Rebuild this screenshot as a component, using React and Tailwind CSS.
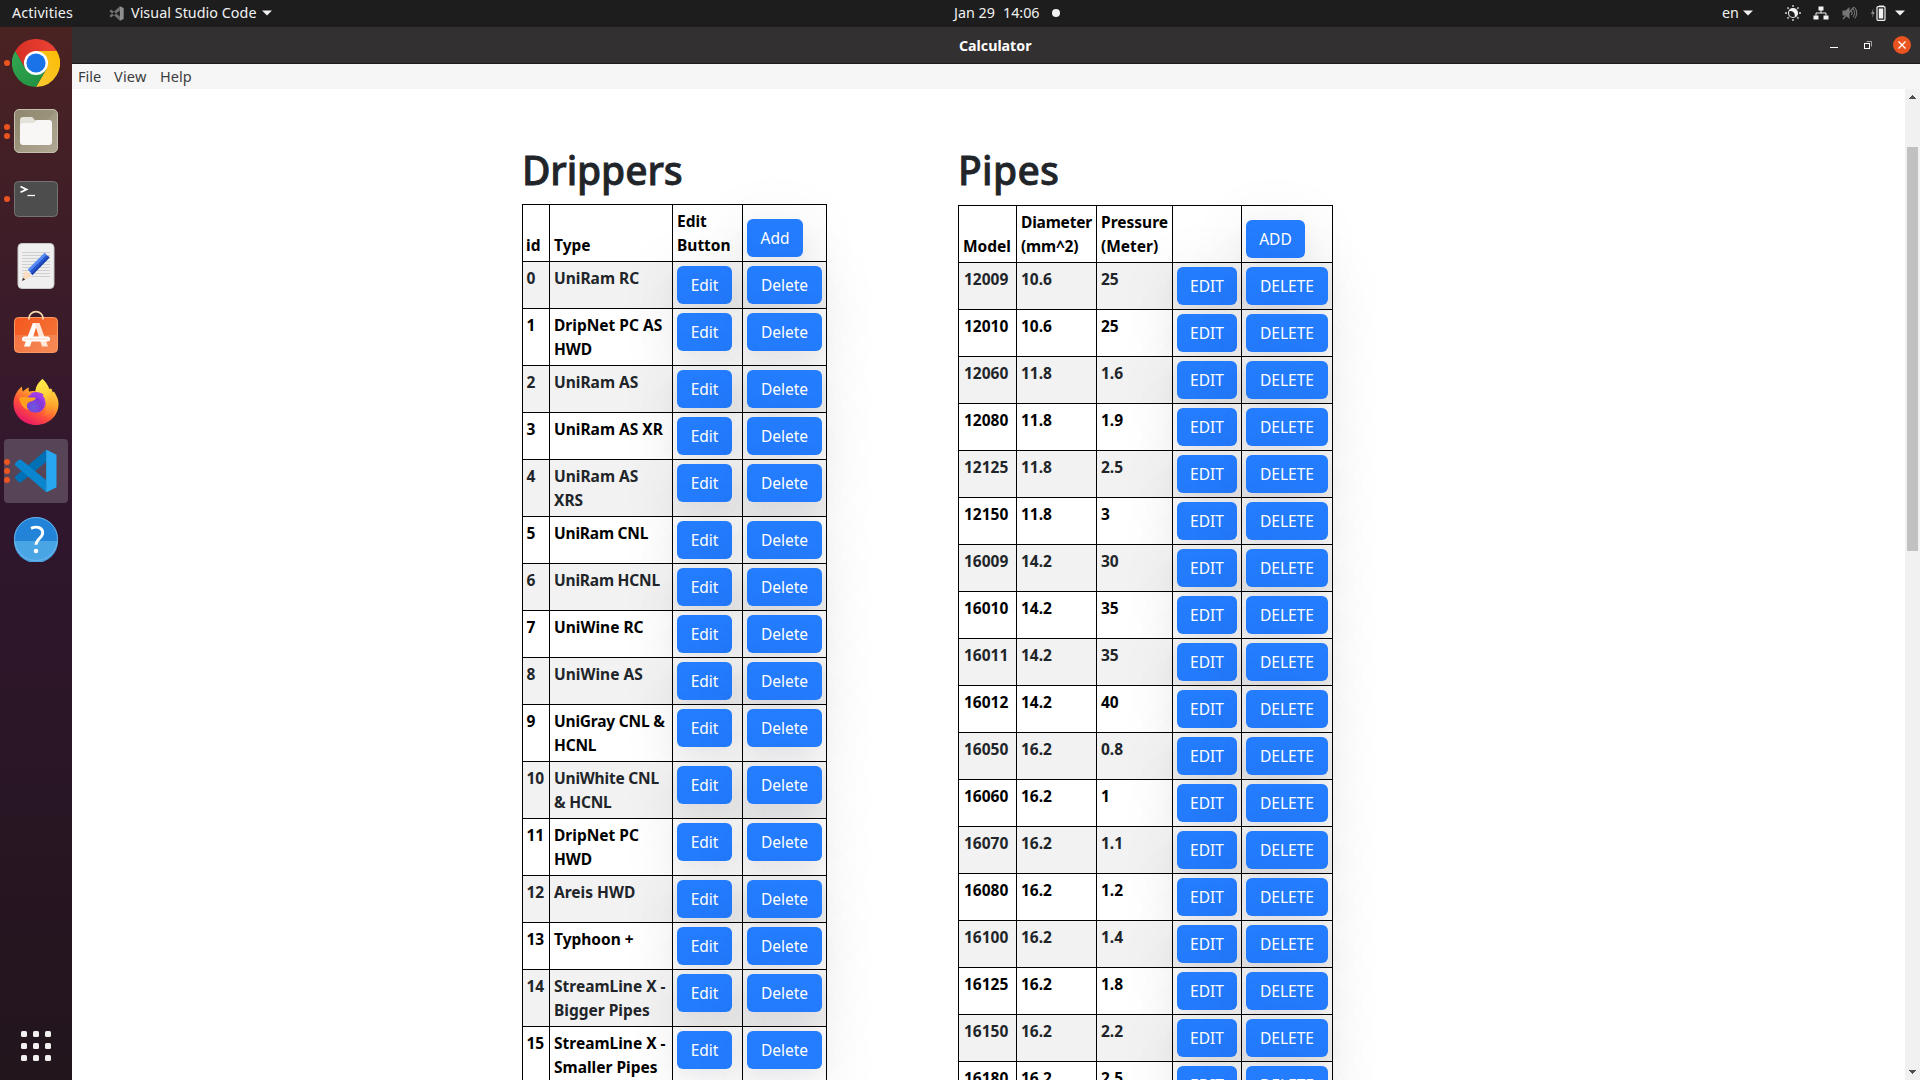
import React from "react";

const drippers = [
  "UniRam RC",
  "DripNet PC AS HWD",
  "UniRam AS",
  "UniRam AS XR",
  "UniRam AS XRS",
  "UniRam CNL",
  "UniRam HCNL",
  "UniWine RC",
  "UniWine AS",
  "UniGray CNL & HCNL",
  "UniWhite CNL & HCNL",
  "DripNet PC HWD",
  "Areis HWD",
  "Typhoon +",
  "StreamLine X - Bigger Pipes",
  "StreamLine X - Smaller Pipes",
];
const tall = [1, 4, 9, 10, 11, 14, 15];

const pipes = [
  ["12009", "10.6", "25"],
  ["12010", "10.6", "25"],
  ["12060", "11.8", "1.6"],
  ["12080", "11.8", "1.9"],
  ["12125", "11.8", "2.5"],
  ["12150", "11.8", "3"],
  ["16009", "14.2", "30"],
  ["16010", "14.2", "35"],
  ["16011", "14.2", "35"],
  ["16012", "14.2", "40"],
  ["16050", "16.2", "0.8"],
  ["16060", "16.2", "1"],
  ["16070", "16.2", "1.1"],
  ["16080", "16.2", "1.2"],
  ["16100", "16.2", "1.4"],
  ["16125", "16.2", "1.8"],
  ["16150", "16.2", "2.2"],
  ["16180", "16.2", "2.5"],
];

function Btn({ w, children }) {
  return (
    <button
      className={
        "block h-[38px] rounded-md bg-[#247cff] text-center text-[15.5px] leading-[37px] font-normal text-white shadow-[0_12px_64px_rgba(17,12,46,0.13),0_8px_20px_rgba(17,12,46,0.04)] " +
        w
      }
    >
      {children}
    </button>
  );
}

const cell = "border-r border-b border-black p-1 overflow-visible whitespace-nowrap";

function Cell({ className = "", children }) {
  return <td className={cell + " align-top " + className}>{children}</td>;
}
function Head({ className = "", children }) {
  return <th className={cell + " align-bottom text-left font-bold " + className}>{children}</th>;
}

const heading =
  "-mt-0.5 h-12 text-[39px] leading-[48px] font-medium text-[#212529] [-webkit-text-stroke:0.8px_#212529]";

function DrippersTable() {
  return (
    <section className="w-[305px]">
      <h1 className={heading + " mb-2.5 tracking-[-0.15px]"}>Drippers</h1>
      <table className="w-[305px] table-fixed border-separate border-spacing-0 border-t border-l border-black text-[15.5px] leading-6 font-bold text-black">
        <colgroup>
          <col className="w-[27px]" />
          <col className="w-[123px]" />
          <col className="w-[70px]" />
          <col className="w-[84px]" />
        </colgroup>
        <thead>
          <tr className="h-[57px]">
            <Head className="pl-[3px]!">id</Head>
            <Head>Type</Head>
            <Head>
              Edit
              <br />
              Button
            </Head>
            <Head>
              <Btn w="w-14">Add</Btn>
            </Head>
          </tr>
        </thead>
        <tbody>
          {drippers.map((name, i) => (
            <tr
              key={name}
              className={(tall.includes(i) ? "h-[57px] " : "h-[47px] ") + (i % 2 === 0 ? "bg-[#f2f2f2] text-[#212529]" : "")}
            >
              <Cell className="pl-[3.5px]!">{i}</Cell>
              <Cell className={"whitespace-normal! " + (name.includes("CNL") ? "tracking-[-0.2px]" : "")}>{name}</Cell>
              <Cell>
                <Btn w="w-[55px]">Edit</Btn>
              </Cell>
              <Cell>
                <Btn w="w-[75px]">Delete</Btn>
              </Cell>
            </tr>
          ))}
        </tbody>
      </table>
    </section>
  );
}

function PipesTable() {
  return (
    <section className="w-[375px]">
      <h1 className={heading + " mb-[11px] tracking-[0.3px]"}>Pipes</h1>
      <table className="w-[375px] table-fixed border-separate border-spacing-0 border-t border-l border-black text-[15.5px] leading-6 font-bold text-black">
        <colgroup>
          <col className="w-[58px]" />
          <col className="w-[80px]" />
          <col className="w-[76px]" />
          <col className="w-[69px]" />
          <col className="w-[91px]" />
        </colgroup>
        <thead>
          <tr className="h-[57px]">
            <Head>Model</Head>
            <Head className="tracking-[-0.2px]">
              Diameter
              <br />
              (mm^2)
            </Head>
            <Head>
              Pressure
              <br />
              (Meter)
            </Head>
            <Head />
            <Head>
              <Btn w="w-[59px]">ADD</Btn>
            </Head>
          </tr>
        </thead>
        <tbody>
          {pipes.map((row, i) => (
            <tr key={row[0]} className={"h-[47px] " + (i % 2 === 0 ? "bg-[#f2f2f2] text-[#212529]" : "")}>
              <Cell className="pl-[5px]!">{row[0]}</Cell>
              <Cell>{row[1]}</Cell>
              <Cell>{row[2]}</Cell>
              <Cell>
                <Btn w="w-[60px]">EDIT</Btn>
              </Cell>
              <Cell>
                <Btn w="w-[82px]">DELETE</Btn>
              </Cell>
            </tr>
          ))}
        </tbody>
      </table>
    </section>
  );
}

function Chrome() {
  return (
    <svg width="48" height="48" viewBox="0 0 48 48">
      <defs>
        <linearGradient id="cr" x1="0" x2="1">
          <stop offset="0" stopColor="#d93025" />
          <stop offset="1" stopColor="#ea4335" />
        </linearGradient>
        <linearGradient id="cy" x1="0" y1="1" x2="1" y2="0">
          <stop offset="0" stopColor="#fcc934" />
          <stop offset="1" stopColor="#fbbc04" />
        </linearGradient>
        <linearGradient id="cg" x1="0" y1="0" x2="1" y2="1">
          <stop offset="0" stopColor="#34a853" />
          <stop offset="1" stopColor="#1e8e3e" />
        </linearGradient>
      </defs>
      <path d="M24 12h20.8A24 24 0 0 0 3.2 12l10.4 18z" fill="url(#cr)" />
      <path d="M34.4 30 24 48A24 24 0 0 0 44.8 12H24z" fill="url(#cy)" />
      <path d="M13.6 30 3.2 12A24 24 0 0 0 24 48l10.4-18z" fill="url(#cg)" />
      <circle cx="24" cy="24" r="12" fill="#fff" />
      <circle cx="24" cy="24" r="9.6" fill="#1a73e8" />
    </svg>
  );
}

function Files() {
  return (
    <svg width="46" height="46" viewBox="0 0 46 46">
      <defs>
        <linearGradient id="fb" x1="0" y1="0" x2="1" y2="1">
          <stop offset="0" stopColor="#8f866d" />
          <stop offset="0.5" stopColor="#9c937c" />
          <stop offset="0.5" stopColor="#a39a84" />
          <stop offset="1" stopColor="#b0a893" />
        </linearGradient>
      </defs>
      <rect x="1.5" y="1.5" width="43" height="43" rx="4.5" fill="url(#fb)" stroke="#c4bfae" />
      <path d="M7 19v-7a3 3 0 0 1 3-3h8.5c2 0 2.300 3.300 4.500 3.300H28V19z" fill="#e4e1d8" />
      <path d="M7 18a3 3 0 0 1 3-3h10c2 0 2.500-3 4.500-3H36a3 3 0 0 1 3 3v19a3 3 0 0 1-3 3H10a3 3 0 0 1-3-3z" fill="#f8f7f5" />
    </svg>
  );
}

function Terminal() {
  return (
    <svg width="46" height="38" viewBox="0 0 46 38">
      <rect x="1.500" y="1.500" width="43" height="35" rx="4" fill="#4d4d4d" stroke="#747474" />
      <path d="M7.500 6.500l6 2.900-6 2.900" fill="none" stroke="#fff" strokeWidth="1.800" />
      <path d="M14.500 15.500h7.500" stroke="#fff" strokeWidth="1.300" />
    </svg>
  );
}

function Editor() {
  return (
    <svg width="38" height="46" viewBox="0 0 38 46">
      <rect x="1" y="0.500" width="36" height="45" rx="4" fill="#efefef" stroke="#c9c9c9" />
      <path d="M5 9.500h28M5 12.500h28M5 15.500h28M5 18.500h28M5 21.500h28M5 24.500h28M5 27.500h28M5 30.500h28M5 33.500h28" stroke="#cfcfcf" />
      <path d="M5 38l2.800-10.500 7.500 5.800z" fill="#fcdcc0" />
      <path d="M5 38l1-3.300 2.200 1.800z" fill="#333" />
      <path d="M11 26.500L27.500 10l5 4.500L15.500 32z" fill="#2a5bd7" />
      <path d="M11 26.500L27.500 10l2 1.800L12.500 28.500z" fill="#5a8cf5" />
      <path d="M14 30.500L31 13l1.500 1.500L15.500 32z" fill="#1d44b0" />
    </svg>
  );
}

function Software() {
  return (
    <svg width="46" height="44" viewBox="0 0 46 44">
      <defs>
        <linearGradient id="sw" x1="0" y1="0" x2="1" y2="0.600">
          <stop offset="0" stopColor="#f4571f" />
          <stop offset="1" stopColor="#f47437" />
        </linearGradient>
      </defs>
      <rect x="1.500" y="7.500" width="43" height="35" rx="4" fill="url(#sw)" stroke="#f79a63" />
      <path d="M2 25h42v14a3 3 0 0 1-3 3H5a3 3 0 0 1-3-3z" fill="#fff" opacity=".14" />
      <path d="M16 9.500V8a7 6.300 0 0 1 14 0v1.500" fill="none" stroke="#f8d8b0" strokeWidth="1.800" />
      <path d="M19.800 13h4.700L17 36.500h-6z" fill="#fff" />
      <path d="M21.500 13h5L35 36.500h-6z" fill="#ffe6d9" />
      <rect x="9" y="26.500" width="28" height="5" rx="2.500" fill="#fff" />
      <path d="M11 29h24" stroke="#f9c8ae" strokeWidth="0.800" />
    </svg>
  );
}

function Firefox() {
  return (
    <svg width="46" height="48" viewBox="0 0 46 48">
      <defs>
        <linearGradient id="ff" x1="0.800" y1="0.100" x2="0.250" y2="1">
          <stop offset="0" stopColor="#ffe14a" />
          <stop offset="0.350" stopColor="#ffa22b" />
          <stop offset="0.650" stopColor="#ff4f3b" />
          <stop offset="1" stopColor="#e5106f" />
        </linearGradient>
        <linearGradient id="ft" x1="0" y1="0" x2="0.300" y2="1">
          <stop offset="0" stopColor="#fff14e" />
          <stop offset="0.500" stopColor="#ffd53d" />
          <stop offset="1" stopColor="#ff9a2a" stopOpacity="0.300" />
        </linearGradient>
        <radialGradient id="fp" cx="0.400" cy="0.700" r="0.700">
          <stop offset="0" stopColor="#6a5be0" />
          <stop offset="0.600" stopColor="#8436d9" />
          <stop offset="1" stopColor="#a63df0" />
        </radialGradient>
      </defs>
      <path
        d="M29.500 1c3 3 5.500 6 6.500 10l2-.5c1 1 1.500 2.500 1.700 4l1.300-1c3 5 4.500 8 4.500 12.500C45.500 38 35.500 47 23 47S.5 37.500.5 25.500C.5 19 4 12 9 8.500c0 2 .3 3.700 1 5C12 11.500 14 10 16 9.500c-.5 1.500-.3 3 0 4 2-.6 4.500-.7 6.500-.2C23 8 26 4 29.500 1z"
        fill="url(#ff)"
      />
      <path d="M29.500 1c8 8 6 11 9 15s4 12-2 19c-3 3-6 3-6 3 5-6 4-15-8-24.700C23 8 26 4 29.500 1z" fill="url(#ft)" />
      <circle cx="22.500" cy="25" r="9.800" fill="url(#fp)" />
      <path d="M6 20c4-2 9 0 16.500-.5 1 2.500-3 3.500-6 4.500-3 1-3.500 5-1 8-5-1-8-6-9.500-12z" fill="#ffa01f" />
      <path d="M17 16c3-2.500 9-3 14 1l-1.500.5c3 3 3.500 8 2.500 11-1-6-4-8-7-10-2-1.500-5-2.500-8-2.500z" fill="#a23de8" />
    </svg>
  );
}

function Code() {
  return (
    <svg width="44" height="44" viewBox="0 0 44 44">
      <path d="M32 1v12L7.500 33c-1 .8-2 .7-3 0L1.500 30c-.8-.8-.8-2 0-2.800z" fill="#0070b5" />
      <path d="M32 43V31L7.500 11c-1-.8-2-.7-3 0L1.500 14c-.8.800-.8 2 0 2.800z" fill="#0a86cf" />
      <path d="M31.500 1.200c.5-.4 1.300-.3 2 0l9 4.500v32.600l-9 4.500c-.7.300-1.500.4-2 0 .5 0 .7-.5.7-1.300V2.500c0-.8-.2-1.300-.7-1.300z" fill="#27a7f0" />
    </svg>
  );
}

function Help() {
  return (
    <svg width="46" height="46" viewBox="0 0 46 46">
      <circle cx="23" cy="23" r="22" fill="#2283d8" />
      <path d="M1 25h44a22 22 0 0 1-44 0z" fill="#4aa5e4" />
      <circle cx="23" cy="23" r="21.500" fill="none" stroke="#72b6ea" strokeWidth="0.900" />
      <path d="M18 12.300c6-2.600 11.700-.6 11.700 4.500 0 5.500-6.700 6-6.700 12" fill="none" stroke="#fff" strokeWidth="2.900" />
      <circle cx="23" cy="35" r="2.300" fill="#fff" />
    </svg>
  );
}

const dock = [
  [Chrome, 1],
  [Files, 2],
  [Terminal, 1],
  [Editor, 0],
  [Software, 0],
  [Firefox, 0],
  [Code, 3],
  [Help, 0],
];

function Dock() {
  return (
    <nav className="flex w-[72px] shrink-0 flex-col items-center justify-between bg-linear-to-b from-[#4a2222] via-[#30162d] via-45% to-[#22151c] pt-1 pb-[19px]">
      <div className="flex flex-col gap-1">
        {dock.map(([Icon, dots], i) => (
          <div
            key={i}
            className={
              "relative flex h-16 w-16 items-center justify-center rounded " +
              (i === 6 ? "bg-[#574456]" : "") +
              (i === 4 ? " pb-1.5" : i === 5 || i === 3 ? " pb-0.5" : "")
            }
          >
            <div className="absolute inset-y-0 left-0 flex flex-col justify-center gap-[3px]">
              {Array.from({ length: dots }, (_, d) => (
                <span key={d} className="size-1.5 rounded-full bg-[#e95420]" />
              ))}
            </div>
            <Icon />
          </div>
        ))}
      </div>
      <div className="grid grid-cols-3 gap-1.5">
        {Array.from({ length: 9 }, (_, i) => (
          <span key={i} className="size-1.5 rounded-[1.5px] bg-[#f2f1f0]" />
        ))}
      </div>
    </nav>
  );
}

function Caret() {
  return (
    <svg width="10" height="6" viewBox="0 0 10 6">
      <path d="M0 0.500h10L5 5.500z" fill="#f2f2f2" />
    </svg>
  );
}

function TopBar() {
  return (
    <header className="flex h-[27px] shrink-0 items-center bg-[#1d1d1d] pb-px text-[14.300px] text-[#f2f2f2]">
      <div className="flex w-[954px] items-center pl-3">
        <span className="w-[97px] tracking-[0.15px]">Activities</span>
        <svg className="mr-[7px]" width="15" height="15" viewBox="0 0 44 44">
          <path d="M32 1v12L6 34l-5-5zM32 43V31L6 10l-5 5z" fill="#707070" />
          <path d="M32 1l11 5v32l-11 5z" fill="#8f8f8f" />
        </svg>
        <span className="mr-[4px] w-[127px] tracking-[0.05px] whitespace-nowrap">Visual Studio Code</span>
        <Caret />
      </div>
      <span className="w-[49px]">Jan 29</span>
      <span className="w-[49px]">14:06</span>
      <span className="size-2 rounded-full bg-[#f2f2f2]" />
      <div className="ml-auto flex items-center pr-[15px]">
        <span className="mr-[5px] w-4">en</span>
        <Caret />
        <svg className="ml-8" width="16" height="16" viewBox="0 0 16 16">
          <path d="M8 0v2M8 14v2M0 8h2M14 8h2M2.400 2.400l1.400 1.400M12.200 12.200l1.400 1.400M2.400 13.600l1.400-1.400M12.200 3.800l1.400-1.400" stroke="#aaa" strokeWidth="1.800" />
          <circle cx="8" cy="8" r="4.500" fill="none" stroke="#ddd" strokeWidth="1.200" />
          <path d="M6.500 3.700A4.600 4.600 0 1 0 12.300 9.500C9 11 5 8 6.500 3.700z" fill="#f2f2f2" transform="rotate(180 8 8)" />
        </svg>
        <svg className="ml-3" width="16" height="14" viewBox="0 0 16 14">
          <path d="M5.500 0.500h5v4h-5zM0.500 9.500h5v4h-5zM10.500 9.500h5v4h-5z" fill="#f2f2f2" />
          <path d="M8 4v3M3 9.500V7h10v2.500" fill="none" stroke="#f2f2f2" />
        </svg>
        <svg className="ml-[13px]" width="16" height="14" viewBox="0 0 16 14">
          <path d="M0.500 4.500h3L7.500 1v12L3.500 9.500h-3z" fill="#777" />
          <path d="M9.300 5a3 3 0 0 1 0 4M11 3a6 6 0 0 1 0 8M12.700 1.500a8.500 8.500 0 0 1 0 11" fill="none" stroke="#777" strokeWidth="1.100" />
          <path d="M1 13L12 1" stroke="#777" strokeWidth="1.300" />
        </svg>
        <svg className="ml-[12px]" width="16" height="16" viewBox="0 0 16 16">
          <path d="M3.500 3L1 9h1.700L2 13l2.800-6H3z" fill="#888" />
          <path d="M9 0.500h5v1H9z" fill="#f2f2f2" />
          <rect x="7" y="1.700" width="8" height="13.600" rx="1" fill="none" stroke="#f2f2f2" strokeWidth="1.200" />
          <rect x="8.800" y="3.500" width="4.400" height="10" fill="#f2f2f2" />
        </svg>
        <span className="ml-[9px] flex">
          <Caret />
        </span>
      </div>
    </header>
  );
}

function ScrollArrow({ down }) {
  return (
    <svg className={down ? "rotate-180" : ""} width="7" height="4" viewBox="0 0 7 4">
      <path d="M3 0h1v1h1v1h1v1h1v1H0V3h1V2h1V1h1z" fill="#505050" />
    </svg>
  );
}

export default function App() {
  return (
    <div className="flex h-[1080px] w-[1920px] flex-col overflow-hidden bg-white font-['Noto_Sans','Open_Sans',sans-serif]">
      <TopBar />
      <div className="flex min-h-0 flex-1">
        <Dock />
        <div className="flex min-w-0 flex-1 flex-col">
          <div className="flex h-[37px] shrink-0 items-center border-b border-[#1c1a1b] bg-[#323030] pr-[9px]">
            <span className="w-[1754px] pt-0.5 pl-[887px] text-[14.200px] font-bold text-white">Calculator</span>
            <div className="flex items-center">
              <span className="mt-[5px] ml-1 h-px w-2 bg-white" />
              <svg className="ml-[26px]" width="8" height="8" viewBox="0 0 8 8">
                <path d="M2.500 0.500h5v5" fill="none" stroke="#a5a4a4" />
                <rect x="0.500" y="2.500" width="5" height="5" fill="none" stroke="#fff" />
              </svg>
              <span className="ml-[21px] flex size-[18px] items-center justify-center rounded-full bg-[#e95420]">
                <svg width="8" height="8" viewBox="0 0 8 8">
                  <path d="M0.500 0.500l7 7M7.500 0.500l-7 7" stroke="#fff" strokeWidth="1.300" />
                </svg>
              </span>
            </div>
          </div>
          <div className="flex h-[25px] shrink-0 items-center bg-[#f6f6f6] pl-1.5 text-[14.500px] text-[#3d3d3d]">
            <span className="w-9">File</span>
            <span className="w-[46px] tracking-[0.2px]">View</span>
            <span>Help</span>
          </div>
          <div className="flex min-h-0 flex-1">
            <main className="flex min-w-0 flex-1 items-start gap-[131px] overflow-hidden pt-[59px] pl-[450px]">
              <DrippersTable />
              <PipesTable />
            </main>
            <div className="flex w-[15px] shrink-0 flex-col items-center justify-between bg-[#f1f1f1] pt-1.5 pb-[6px]">
              <ScrollArrow />
              <span className="mt-12 mb-auto h-[404px] w-[11px] bg-[#c1c1c1]" />
              <ScrollArrow down />
            </div>
          </div>
        </div>
      </div>
    </div>
  );
}
